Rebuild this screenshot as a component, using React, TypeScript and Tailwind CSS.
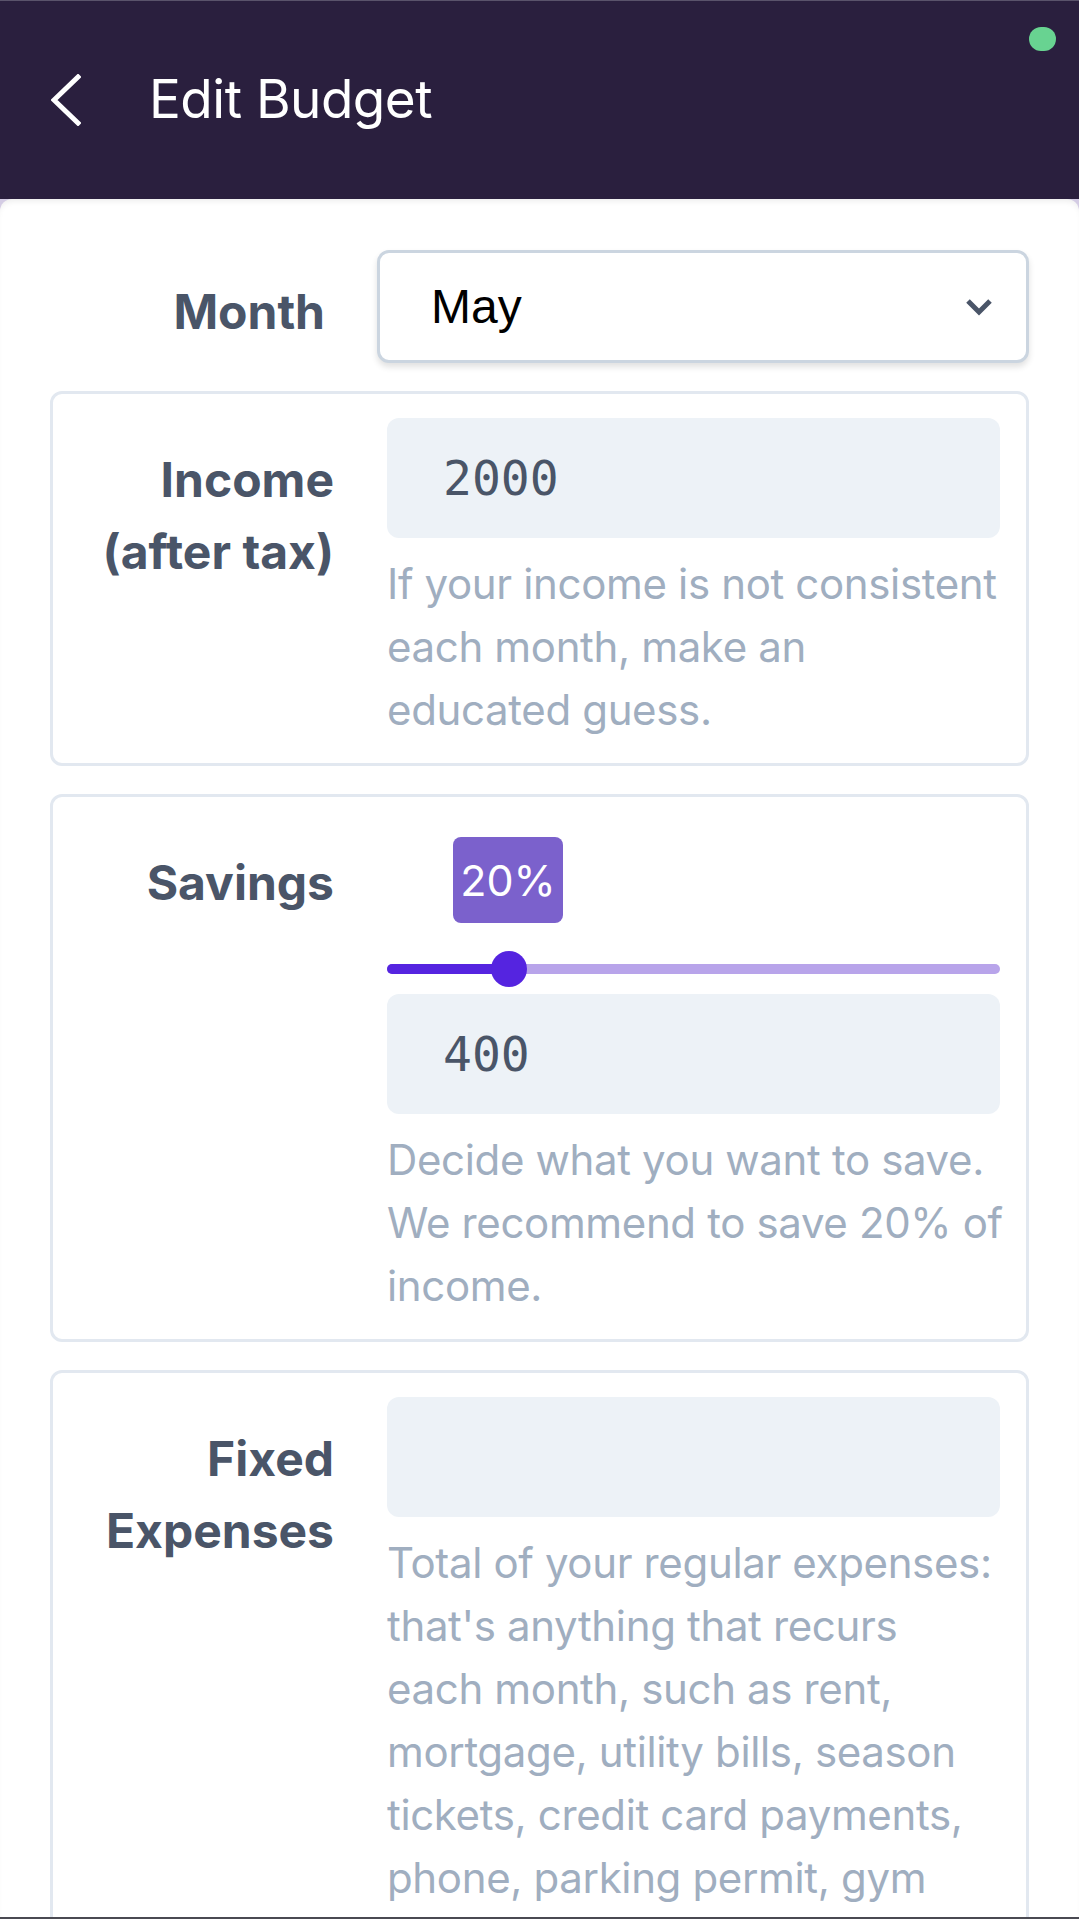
import React from "react";

const sans = "font-['Inter','Noto_Sans',sans-serif]";

function Field({
  label,
  children,
  hint
}: {
  label: string;
  children: React.ReactNode;
  hint: string[];
}) {
  return (
    <div className="flex w-full rounded-[12px] border-[3px] border-[#e2e8f0] pt-[24px] pl-[24px] pr-[26px] pb-[22px] gap-[53px]">
      <div className="w-[257px] shrink-0 pt-[26px] text-right text-[48px] leading-[72px] font-bold text-[#4a5568]">
        {label}
      </div>
      <div className="flex-1 min-w-0 flex flex-col">
        {children}
        <p className="mt-[14px] text-[42px] leading-[63px] tracking-[-0.35px] text-[#a0aec0] whitespace-nowrap">
          {hint.map((line, i) => (
            <span key={i} className="block">
              {line}
            </span>
          ))}
        </p>
      </div>
    </div>
  );
}

function NumberBox({ value }: { value: string }) {
  return (
    <div className="h-[120px] w-full rounded-[12px] bg-[#edf2f7] pl-[56px] flex items-center font-['DejaVu_Sans_Mono',monospace] text-[48px] text-[#4a5568]">
      {value}
    </div>
  );
}

function SavingsSlider() {
  return (
    <div className="pt-[16px] pb-[20px]">
      <div className="ml-[66px] w-[110px] h-[86px] rounded-[8px] bg-[#7b61cc] flex items-center justify-center text-white text-[43px]">
        20%
      </div>
      <div className="relative mt-[41px] h-[10px] w-full rounded-full bg-[#b8a4ea]">
        <div className="h-full w-[122px] rounded-full bg-[#5524e0]" />
        <div className="absolute left-[104px] top-[-13px] w-[36px] h-[36px] rounded-full bg-[#5524e0]" />
      </div>
    </div>
  );
}

export default function App() {
  return (
    <div className={`w-[1079px] h-[1919px] overflow-hidden bg-[#d4cce4] border-b-2 border-[#4a4a52] flex flex-col ${sans}`}>
      <header className="relative h-[199px] shrink-0 bg-[#2a1f3e] border-t border-[#5a536b] flex items-center pl-[51px]">
        <svg width="30" height="52" viewBox="0 0 30 52" fill="none" stroke="white" strokeWidth="5" strokeLinecap="square">
          <polyline points="27,3 3,26 27,49" />
        </svg>
        <h1 className="ml-[68px] text-[53px] text-white tracking-[-0.5px]">Edit Budget</h1>
        <span className="absolute top-[26px] right-[23px] w-[27px] h-[24px] rounded-full bg-[#68d391]" />
      </header>

      <main className="flex-1 bg-white rounded-t-[12px] shadow-[inset_0_5px_6px_-3px_rgba(0,0,0,0.08)] px-[50px] pt-[51px] flex flex-col gap-[28px]">
        <div className="flex items-center">
          <div className="w-[275px] shrink-0 text-right text-[48px] font-bold text-[#4a5568] pt-[10px]">Month</div>
          <div className="ml-[52px] flex-1 h-[113px] rounded-[12px] border-[3px] border-[#cbd5e0] bg-white shadow-[0_4px_6px_rgba(0,0,0,0.12)] flex items-center justify-between pl-[51px] pr-[33px]">
            <span className="font-['Liberation_Sans',Arial,sans-serif] text-[48px] text-black">May</span>
            <svg width="28" height="18" viewBox="0 0 28 18" fill="none" stroke="#4a5568" strokeWidth="5">
              <polyline points="3,3 14,14 25,3" />
            </svg>
          </div>
        </div>

        <Field
          label="Income (after tax)"
          hint={["If your income is not consistent", "each month, make an", "educated guess."]}
        >
          <NumberBox value="2000" />
        </Field>

        <Field
          label="Savings"
          hint={["Decide what you want to save.", "We recommend to save 20% of", "income."]}
        >
          <SavingsSlider />
          <NumberBox value="400" />
        </Field>

        <Field
          label="Fixed Expenses"
          hint={[
            "Total of your regular expenses:",
            "that's anything that recurs",
            "each month, such as rent,",
            "mortgage, utility bills, season",
            "tickets, credit card payments,",
            "phone, parking permit, gym"
          ]}
        >
          <NumberBox value="" />
        </Field>
      </main>
    </div>
  );
}
